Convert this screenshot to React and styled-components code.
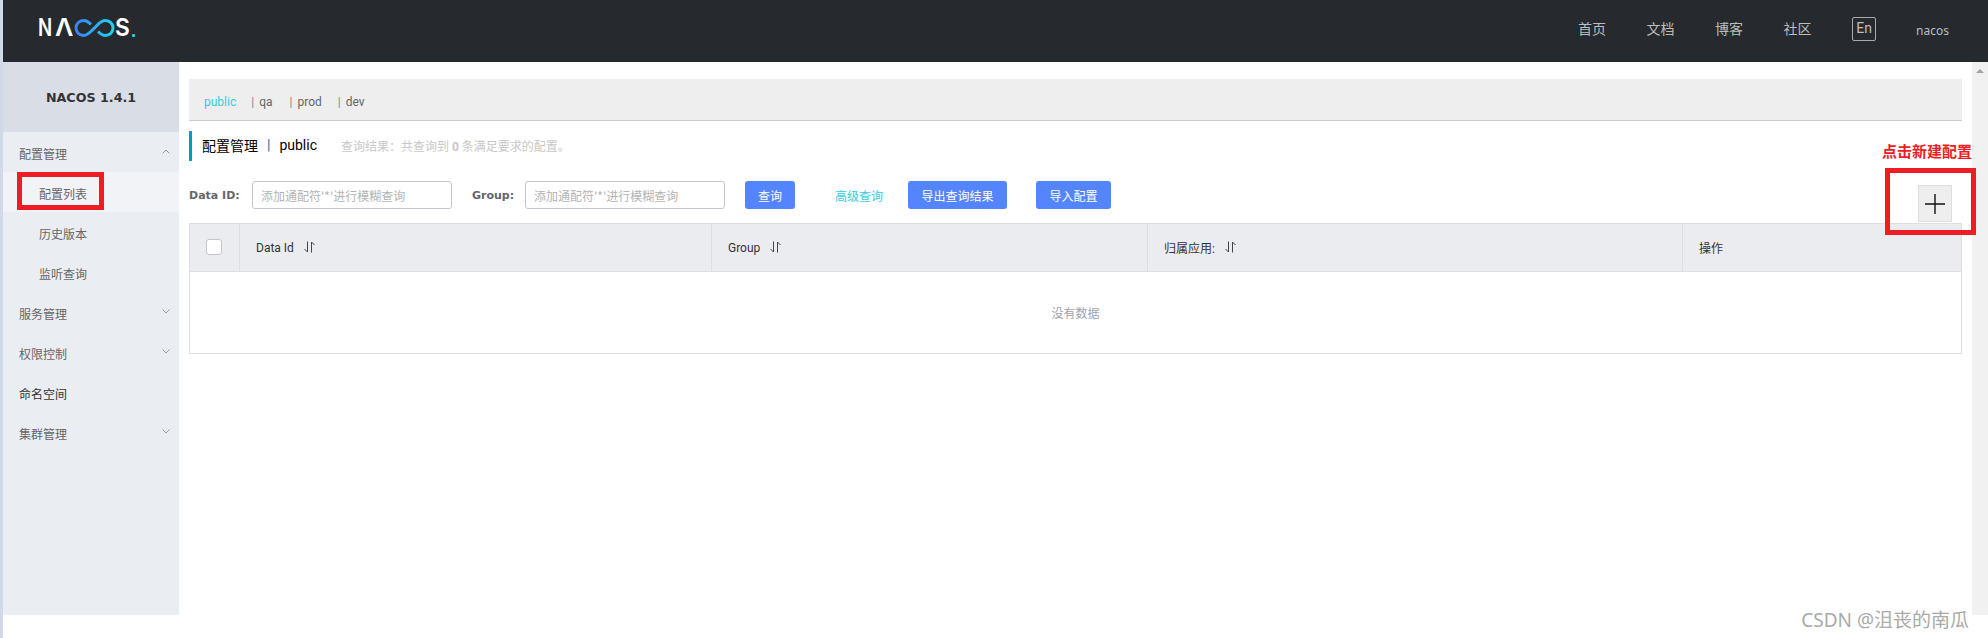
import React from "react";
import styled, { createGlobalStyle } from "styled-components";

const Global = createGlobalStyle`
  html, body { margin: 0; padding: 0; background: #fff; }
  *, *::before, *::after { box-sizing: border-box; }
  body { font-family: Roboto, "Noto Sans CJK SC", sans-serif; font-size: 12px; overflow: hidden; }
`;

const Page = styled.div`
  width: 1988px; height: 638px; border-left: 3px solid #cfd9ea;
  display: flex; flex-direction: column; overflow: hidden;
`;
const Header = styled.header`
  height: 62px; flex: none; background: #262a2e; display: flex; align-items: center;
  justify-content: space-between; padding: 0 39px 0 35px;
`;
const Logo = styled.div`
  display: flex; align-items: center; height: 18px; margin-top: -6px; color: #fff;
  font: 600 24px/18px Inter, sans-serif;
`;
const LogoLetter = styled.span`
  display: inline-block; width: ${(p) => p.$w}px; transform: scaleX(${(p) => p.$sx}); transform-origin: 0 50%;
`;
const LogoDot = styled.span`
  width: 3px; height: 3px; background: #1cd3e8; align-self: flex-end; margin-left: 1px; border-radius: 1px;
`;
const Nav = styled.nav`display: flex; align-items: center; color: #bdbdbd;`;
const NavLink = styled.span`font-size: 14px; line-height: 20px; width: 68.5px; margin-top: -4px;`;
const LangBox = styled.span`
  width: 24px; height: 24px; border: 1px solid #aaa; border-radius: 2px; font-size: 14px; line-height: 20px;
  text-align: center; margin: -4px 40px 0 0; color: #bdbdbd;
`;
const User = styled.span`font: 12px "Noto Sans", sans-serif; color: #bdbdbd; line-height: 16px;`;

const Body = styled.div`height: 553px; flex: none; display: flex;`;
const Sidebar = styled.aside`width: 176px; flex: none; background: #eaedf1;`;
const SideTitle = styled.div`
  height: 70px; background: #d8dde6; display: flex; align-items: center; justify-content: center;
  font: 700 12.7px "DejaVu Sans", sans-serif; color: #333;
`;
const MenuRow = styled.div`
  position: relative; height: 40px; display: flex; align-items: center; justify-content: space-between;
  padding: 0 9px 0 ${(p) => (p.$sub ? 36 : 16)}px; background: ${(p) => (p.$active ? "#f2f3f7" : "transparent")};
  color: ${(p) => (p.$dark ? "#333" : "#666")};
  ${(p) => p.$active && `&::after { content: ""; position: absolute; left: 14px; top: 0; width: 87px; height: 38px; border: 5px solid #ee1c25; }`}
`;
const MenuLabel = styled.span`font-size: 12px; line-height: 16px; padding-top: 6px;`;
const Chevron = styled.svg`width: 8px; height: 5px; fill: none; stroke: #999; stroke-width: 1; display: block; margin-top: -1px;`;

const Main = styled.main`position: relative; flex: 1; min-width: 0; padding: 17px 10px 0;`;
const Tabs = styled.div`
  height: 42px; background: #eee; border-bottom: 1px solid #ccc; display: flex; align-items: center;
  padding: 4px 0 0 15px; font-size: 12px; color: #666;
`;
const Tab = styled.span`
  color: ${(p) => (p.$active ? "#33cde5" : "#666")}; margin-right: ${(p) => p.$mr}px; white-space: nowrap;
`;
const TabSep = styled.span`color: #888; margin-right: 5px;`;
const TitleRow = styled.div`
  margin-top: 10px; height: 30px; border-left: 3px solid #09c; display: flex; align-items: center; padding: 0 0 2px 10px;
`;
const TitleMain = styled.span`font-size: 14px; color: #000; white-space: pre;`;
const TitleSep = styled.span`font-size: 14px; color: #1a6f96; margin: 0 9px;`;
const Hint = styled.span`font-size: 12px; color: #c8c8c8; margin-left: 24px; b { font-weight: 700; }`;
const FormRow = styled.div`margin-top: 20px; height: 28px; display: flex; align-items: center;`;
const FieldLabel = styled.label`
  font: 700 11px "DejaVu Sans", sans-serif; color: #666; width: ${(p) => p.$w}px; margin-left: ${(p) => p.$ml || 0}px;
  flex: none; padding-top: 1px;
`;
const Input = styled.input`
  width: 200px; height: 28px; flex: none; border: 1px solid #c4c6cf; border-radius: 3px; padding: 0 8px;
  font: 12px "Noto Sans CJK SC", sans-serif; background: #fff; outline: none;
  &::placeholder { color: #b4b4b4; opacity: 1; }
`;
const PrimaryButton = styled.button`
  height: 28px; width: ${(p) => p.$w}px; margin-left: ${(p) => p.$ml}px; flex: none; border: 0; border-radius: 3px;
  background: #5584ff; color: #fff; font: 12px "Noto Sans CJK SC", sans-serif; padding: 0;
`;
const AdvancedLink = styled.a`
  font-size: 12px; color: #33cde5; width: 73px; margin-left: 40px; flex: none; white-space: nowrap;
`;
const Table = styled.div`margin-top: 14px; height: 131px; border: 1px solid #dcdee3;`;
const HeadRow = styled.div`
  height: 48px; display: grid; grid-template-columns: 50px 472px 436px 535px 1fr; background: #ebecf0;
  border-bottom: 1px solid #dcdee3;
`;
const HeadCell = styled.div`
  display: flex; align-items: center; padding-left: 16px; border-right: 1px solid #dcdee3; color: #333; font-size: 12px;
  &:last-child { border-right: 0; }
`;
const CheckCell = styled(HeadCell)`padding-bottom: 1px;`;
const Check = styled.span`
  width: 16px; height: 16px; background: #fff; border: 1px solid #c4c6cf; border-radius: 3px; display: block;
`;
const SortIcon = styled.svg`
  width: 11px; height: 12px; margin-left: 10px; margin-top: -2px; fill: none; stroke: #444; stroke-width: 1;
`;
const Empty = styled.div`
  height: 81px; display: flex; align-items: center; justify-content: center; color: #a0a2ad; font-size: 12px;
`;
const Annotation = styled.div`
  position: absolute; top: 81px; right: -4px; display: flex; flex-direction: column; align-items: flex-end;
`;
const AnnotationText = styled.div`
  height: 25px; line-height: 18px; font-size: 15px; font-weight: 700; color: #ee1c25; margin-right: 4px; white-space: nowrap;
`;
const AnnotationBox = styled.div`
  width: 91px; height: 67px; border: 5px solid #ee1c25; display: flex; justify-content: flex-end; padding: 12px 19px 0 0;
`;
const AddButton = styled.button`
  width: 34px; height: 37px; background: #eee; border: 1px solid #ddd; padding: 0; display: flex;
  align-items: center; justify-content: center;
`;
const Scrollbar = styled.div`
  width: 16px; flex: none; background: #f1f1f1; display: flex; justify-content: center; padding-top: 7px;
`;
const ScrollArrow = styled.span`
  width: 0; height: 0; border: 4px solid transparent; border-top: 0; border-bottom: 4px solid #a3a3a3;
`;
const Footer = styled.footer`
  flex: 1; display: flex; justify-content: flex-end; align-items: flex-start; padding: 0 19px 0 0;
`;
const Watermark = styled.span`
  font: 19px/11px "Noto Sans", "Noto Sans CJK SC", sans-serif; color: #aaa; white-space: nowrap;
`;

const Up = () => <Chevron viewBox="0 0 8 5"><path d="M0.5 4.5 L4 1 L7.5 4.5" /></Chevron>;
const Down = () => <Chevron viewBox="0 0 8 5"><path d="M0.5 0.5 L4 4 L7.5 0.5" /></Chevron>;
const Sort = () => (
  <SortIcon viewBox="0 0 11 12">
    <path d="M3.5 0.5 V11 L0.5 8" />
    <path d="M7.5 11.5 V1 L10.5 4" />
  </SortIcon>
);

const menu = [
  { t: "配置管理", c: <Up /> },
  { t: "配置列表", sub: true, active: true },
  { t: "历史版本", sub: true },
  { t: "监听查询", sub: true },
  { t: "服务管理", c: <Down /> },
  { t: "权限控制", c: <Down /> },
  { t: "命名空间", dark: true },
  { t: "集群管理", c: <Down /> },
];

export default function App() {
  return (
    <Page>
      <Global />
      <Header>
        <Logo aria-label="NACOS">
          <LogoLetter $w={17} $sx={0.78}>N</LogoLetter>
          <LogoLetter $w={19} $sx={1.05}>Λ</LogoLetter>
          <svg width="41" height="18" viewBox="0 0 41 18" fill="none">
            <defs>
              <linearGradient id="inf" x1="0" x2="1" y1="0" y2="0">
                <stop offset="0" stopColor="#3b82f6" />
                <stop offset="1" stopColor="#1cd3f0" />
              </linearGradient>
            </defs>
            <path d="M17 5.5 C14 2.5 11.5 1.5 9.5 1.5 C5 1.5 2 5 2 9 C2 13 5 16.5 9.5 16.5 C14.5 16.5 17 12 20.5 9 C24 5.5 26.5 1.5 31.5 1.5 C36 1.5 39 5 39 9 C39 13 36 16.5 31.5 16.5 C29.5 16.5 27 15.5 24 12.5" stroke="url(#inf)" strokeWidth="3" />
          </svg>
          <LogoLetter $w={16} $sx={0.95}>S</LogoLetter>
          <LogoDot />
        </Logo>
        <Nav>
          <NavLink>首页</NavLink>
          <NavLink>文档</NavLink>
          <NavLink>博客</NavLink>
          <NavLink>社区</NavLink>
          <LangBox>En</LangBox>
          <User>nacos</User>
        </Nav>
      </Header>
      <Body>
        <Sidebar>
          <SideTitle>NACOS 1.4.1</SideTitle>
          {menu.map((m) => (
            <MenuRow key={m.t} $sub={m.sub} $active={m.active} $dark={m.dark}>
              <MenuLabel>{m.t}</MenuLabel>
              {m.c}
            </MenuRow>
          ))}
        </Sidebar>
        <Main>
          <Tabs>
            <Tab $active $mr={15}>public</Tab>
            <TabSep>|</TabSep><Tab $mr={17}>qa</Tab>
            <TabSep>|</TabSep><Tab $mr={16}>prod</Tab>
            <TabSep>|</TabSep><Tab $mr={0}>dev</Tab>
          </Tabs>
          <TitleRow>
            <TitleMain>配置管理</TitleMain>
            <TitleSep>|</TitleSep>
            <TitleMain>public</TitleMain>
            <Hint>查询结果：共查询到 <b>0</b> 条满足要求的配置。</Hint>
          </TitleRow>
          <FormRow>
            <FieldLabel $w={63}>Data ID:</FieldLabel>
            <Input placeholder="添加通配符'*'进行模糊查询" />
            <FieldLabel $w={53} $ml={20}>Group:</FieldLabel>
            <Input placeholder="添加通配符'*'进行模糊查询" />
            <PrimaryButton $w={50} $ml={20}>查询</PrimaryButton>
            <AdvancedLink>高级查询</AdvancedLink>
            <PrimaryButton $w={99} $ml={0}>导出查询结果</PrimaryButton>
            <PrimaryButton $w={75} $ml={29}>导入配置</PrimaryButton>
          </FormRow>
          <Table>
            <HeadRow>
              <CheckCell><Check /></CheckCell>
              <HeadCell>Data Id<Sort /></HeadCell>
              <HeadCell>Group<Sort /></HeadCell>
              <HeadCell>归属应用:<Sort /></HeadCell>
              <HeadCell>操作</HeadCell>
            </HeadRow>
            <Empty>没有数据</Empty>
          </Table>
          <Annotation>
            <AnnotationText>点击新建配置</AnnotationText>
            <AnnotationBox>
              <AddButton aria-label="新建配置">
                <svg width="20" height="20" viewBox="0 0 20 20" stroke="#111" strokeWidth="1.4">
                  <path d="M0 10 H20 M10 0 V20" />
                </svg>
              </AddButton>
            </AnnotationBox>
          </Annotation>
        </Main>
        <Scrollbar><ScrollArrow /></Scrollbar>
      </Body>
      <Footer><Watermark>CSDN @沮丧的南瓜</Watermark></Footer>
    </Page>
  );
}
